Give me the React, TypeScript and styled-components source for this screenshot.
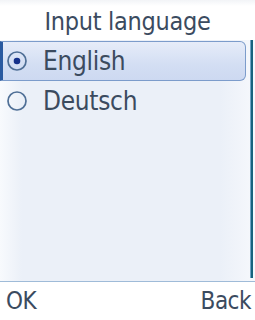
import { createGlobalStyle, styled } from 'styled-components';

const GlobalStyle = createGlobalStyle`
  html, body {
    margin: 0;
    padding: 0;
    background: #ffffff;
  }
  body {
    font-family: 'DejaVu Sans', 'Liberation Sans', sans-serif;
    font-stretch: condensed;
  }
`;

type Lang = { id: string; label: string };

const languages: Lang[] = [
  { id: 'en', label: 'English' },
  { id: 'de', label: 'Deutsch' },
];

const Radio = ({ checked }: { checked: boolean }) => (
  <SC.RadioIcon width='22' height='22' viewBox='0 0 22 22'>
    <circle cx='11' cy='11' r='9' fill='none' stroke='#4f6f96' strokeWidth='1.7' />
    {checked && <circle cx='11' cy='11' r='3.3' fill='#14308a' />}
  </SC.RadioIcon>
);

export default function App() {
  const selected = 'en';

  return (
    <>
      <GlobalStyle />
      <SC.Screen>
        <SC.Header>Input language</SC.Header>
        <SC.Body>
          <SC.List>
            {languages.map((lang) => (
              <SC.Row key={lang.id} $active={lang.id === selected}>
                <Radio checked={lang.id === selected} />
                <SC.Label>{lang.label}</SC.Label>
              </SC.Row>
            ))}
          </SC.List>
          <SC.Scrollbar />
        </SC.Body>
        <SC.Softkeys>
          <SC.Key>OK</SC.Key>
          <SC.Key>Back</SC.Key>
        </SC.Softkeys>
      </SC.Screen>
    </>
  );
}

const SC = {
  Screen: styled.div`
    width: 255px;
    height: 320px;
    display: flex;
    flex-direction: column;
    background: #ffffff;
    color: #3b4b5f;
    overflow: hidden;
  `,
  Header: styled.div`
    height: 40px;
    display: flex;
    align-items: center;
    justify-content: center;
    font-size: 25px;
    letter-spacing: -0.3px;
    background: linear-gradient(#f2f4f7 0px, #ffffff 6px);
    box-sizing: border-box;
    padding-top: 2px;
  `,
  Body: styled.div`
    flex: 1;
    display: flex;
    border-bottom: 1px solid #9fbbd8;
    background: linear-gradient(
      90deg,
      #f8fafd 0px,
      #ebf0f8 22px,
      #ebf0f8 220px,
      #f6f8fc 100%
    );
    padding-bottom: 3px;
  `,
  List: styled.div`
    flex: 1;
    display: flex;
    flex-direction: column;
    padding-top: 1px;
  `,
  Row: styled.div<{ $active: boolean }>`
    height: 40px;
    display: flex;
    align-items: center;
    gap: 15px;
    padding-left: 3px;
    box-sizing: border-box;
    margin-right: 3px;
    border: 1px solid ${({ $active }) => ($active ? '#7c9ccb' : 'transparent')};
    border-left: 3px solid ${({ $active }) => ($active ? '#2a5aa0' : 'transparent')};
    border-radius: 0 6px 6px 0;
    background: ${({ $active }) =>
      $active ? 'linear-gradient(#e6ecf9, #d3def3 60%, #cdd9f1)' : 'transparent'};
  `,
  RadioIcon: styled.svg`
    flex: none;
  `,
  Label: styled.span`
    font-size: 26px;
    letter-spacing: -0.3px;
    line-height: 1;
    padding-bottom: 1px;
  `,
  Scrollbar: styled.div`
    width: 2px;
    margin: 0 2px 0 1px;
    background: #17637e;
    border-left: 1px solid #6fa6c6;
  `,
  Softkeys: styled.div`
    height: 38px;
    display: flex;
    align-items: center;
    justify-content: space-between;
    padding: 0 4px 0 6px;
    font-size: 24px;
    letter-spacing: -0.5px;
  `,
  Key: styled.span`
    line-height: 1;
  `,
};
